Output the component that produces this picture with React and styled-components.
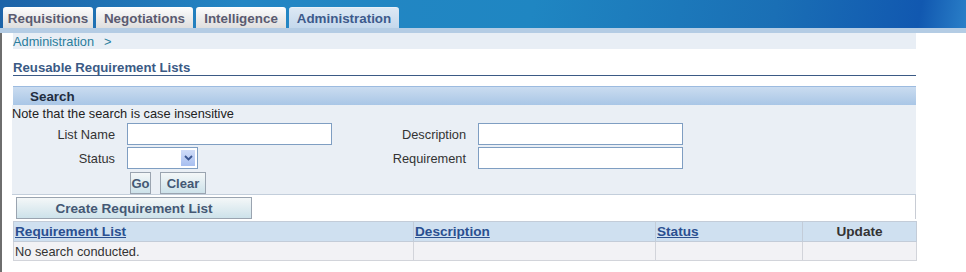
import React from 'react'
import styled, { createGlobalStyle } from 'styled-components'

const GlobalStyle = createGlobalStyle`
  body {
    margin: 0;
    background: #ffffff;
    font-family: "Liberation Sans", Arial, sans-serif;
    font-size: 12.8px;
    color: #222;
  }
`

const Banner = styled.div`
  height: 28px;
  display: flex;
  align-items: flex-end;
  gap: 3px;
  padding-left: 3px;
  background: linear-gradient(100deg, #1d63a8 0%, #2486c4 25%, #1f86c2 55%, #1a6fb5 80%, #1158b0 95%, #2a7fc8 100%);
`

const Tab = styled.div`
  width: ${p => p.$w}px;
  height: 21px;
  box-sizing: border-box;
  display: flex;
  align-items: center;
  justify-content: center;
  font-size: 13.4px;
  font-weight: bold;
  border-radius: 3px 3px 0 0;
  color: ${p => (p.$active ? '#3d5a8c' : '#5a5a70')};
  background: ${p =>
    p.$active
      ? 'linear-gradient(#dce8f4, #c4d8ec)'
      : 'linear-gradient(#fbfbfb, #dedede)'};
  border-top: 1px solid ${p => (p.$active ? '#e8f0f8' : '#ffffff')};
`

const SubBar = styled.div`
  height: 5px;
  background: #b4cce4;
`

const Main = styled.div`
  border-left: 2px solid #6e6e6e;
  padding-left: 11px;
  min-height: 239px;
`

const Content = styled.div`
  width: 903px;
`

const Crumbs = styled.div`
  height: 16px;
  display: flex;
  align-items: center;
  background: #e8eef5;
  color: #2a7d9c;
  gap: 10px;
`

const Title = styled.h1`
  margin: 11px 0 0;
  font-size: 13.2px;
  font-weight: bold;
  color: #3b5a85;
  height: 15px;
  line-height: 15px;
  border-bottom: 1px solid #3b5a85;
`

const SearchHead = styled.div`
  margin-top: 10px;
  height: 19px;
  box-sizing: border-box;
  border-top: 1px solid #9cbbe0;
  background: linear-gradient(#cadcf0, #a9c6e6);
  padding-left: 17px;
  display: flex;
  align-items: center;
  font-size: 13.4px;
  font-weight: bold;
  color: #1f2d40;
`

const SearchBody = styled.div`
  background: #eaeff5;
  border-bottom: 1px solid #c3cedb;
  height: 90px;
  margin-left: -1px;
  padding-top: 2px;
  box-sizing: border-box;
`

const Note = styled.div`
  line-height: 13px;
`

const FieldGrid = styled.div`
  display: grid;
  grid-template-columns: 103px 205px 122px 205px;
  column-gap: 12px;
  row-gap: 2px;
  margin-top: 3px;
  align-items: center;
`

const Label = styled.label`
  text-align: right;
  color: #333;
`

const TextBox = styled.div`
  height: 22px;
  box-sizing: border-box;
  border: 1px solid #7f9ec2;
  background: #fff;
`

const Select = styled.div`
  width: 71px;
  height: 22px;
  box-sizing: border-box;
  border: 1px solid #7f9ec2;
  background: #fff;
  display: flex;
  justify-content: flex-end;
  padding: 2px;
`

const Arrow = styled.div`
  width: 14px;
  background: linear-gradient(#d0dcf8, #a8bff0);
  display: flex;
  align-items: center;
  justify-content: center;
`

const Buttons = styled.div`
  display: flex;
  gap: 9px;
  margin: 3px 0 0 118px;
`

const Btn = styled.div`
  height: 22px;
  box-sizing: border-box;
  display: flex;
  align-items: center;
  justify-content: center;
  border: 1px solid #9aa4b0;
  background: linear-gradient(#f4f7f8, #cde2ea);
  font-weight: bold;
  font-size: ${p => p.$size || 13}px;
  color: #445874;
  width: ${p => p.$w}px;
`

const CreateRow = styled.div`
  padding: 2px 0 0 3px;
  border-right: 1px solid #c8ccd4;
`

const Table = styled.table`
  width: 903px;
  table-layout: fixed;
  margin-top: 2px;
  border-collapse: collapse;
`

const Th = styled.th`
  height: 19px;
  padding: 0 1px;
  background: #cfe0f0;
  border: 1px solid #c3ccd8;
  text-align: ${p => p.$align || 'left'};
  font-size: 13.6px;
  font-weight: bold;
  color: #333;
  & a {
    color: #2a4f90;
    text-decoration: underline;
  }
`

const Td = styled.td`
  height: 18px;
  padding: 0 1px;
  background: #f2f2f5;
  border: 1px solid #d2d4da;
  color: #333;
`

const tabs = [
  { name: 'Requisitions', w: 90 },
  { name: 'Negotiations', w: 97 },
  { name: 'Intelligence', w: 90 },
  { name: 'Administration', w: 110, active: true }
]

const columns = [
  { name: 'Requirement List', w: 400, link: true },
  { name: 'Description', w: 242, link: true },
  { name: 'Status', w: 147, link: true },
  { name: 'Update', w: 114, align: 'center' }
]

const App = () => (
  <>
    <GlobalStyle />
    <Banner>
      {tabs.map(t => (
        <Tab key={t.name} $w={t.w} $active={t.active}>
          {t.name}
        </Tab>
      ))}
    </Banner>
    <SubBar />
    <Main>
      <Content>
        <Crumbs>
          <span>Administration</span>
          <span>&gt;</span>
        </Crumbs>
        <Title>Reusable Requirement Lists</Title>
        <SearchHead>Search</SearchHead>
        <SearchBody>
          <Note>Note that the search is case insensitive</Note>
          <FieldGrid>
            <Label>List Name</Label>
            <TextBox />
            <Label>Description</Label>
            <TextBox />
            <Label>Status</Label>
            <Select>
              <Arrow>
                <svg width="9" height="6" viewBox="0 0 9 6">
                  <path d="M1 1 L4.5 4.5 L8 1" stroke="#3a5590" strokeWidth="1.8" fill="none" />
                </svg>
              </Arrow>
            </Select>
            <Label>Requirement</Label>
            <TextBox />
          </FieldGrid>
          <Buttons>
            <Btn $w={21}>Go</Btn>
            <Btn $w={46}>Clear</Btn>
          </Buttons>
        </SearchBody>
        <CreateRow>
          <Btn $w={236} $size={13.6}>Create Requirement List</Btn>
        </CreateRow>
        <Table>
          <colgroup>
            {columns.map(c => (
              <col key={c.name} style={{ width: c.w }} />
            ))}
          </colgroup>
          <thead>
            <tr>
              {columns.map(c => (
                <Th key={c.name} $align={c.align}>
                  {c.link ? <a>{c.name}</a> : c.name}
                </Th>
              ))}
            </tr>
          </thead>
          <tbody>
            <tr>
              <Td>No search conducted.</Td>
              <Td />
              <Td />
              <Td />
            </tr>
          </tbody>
        </Table>
      </Content>
    </Main>
  </>
)

export default App
